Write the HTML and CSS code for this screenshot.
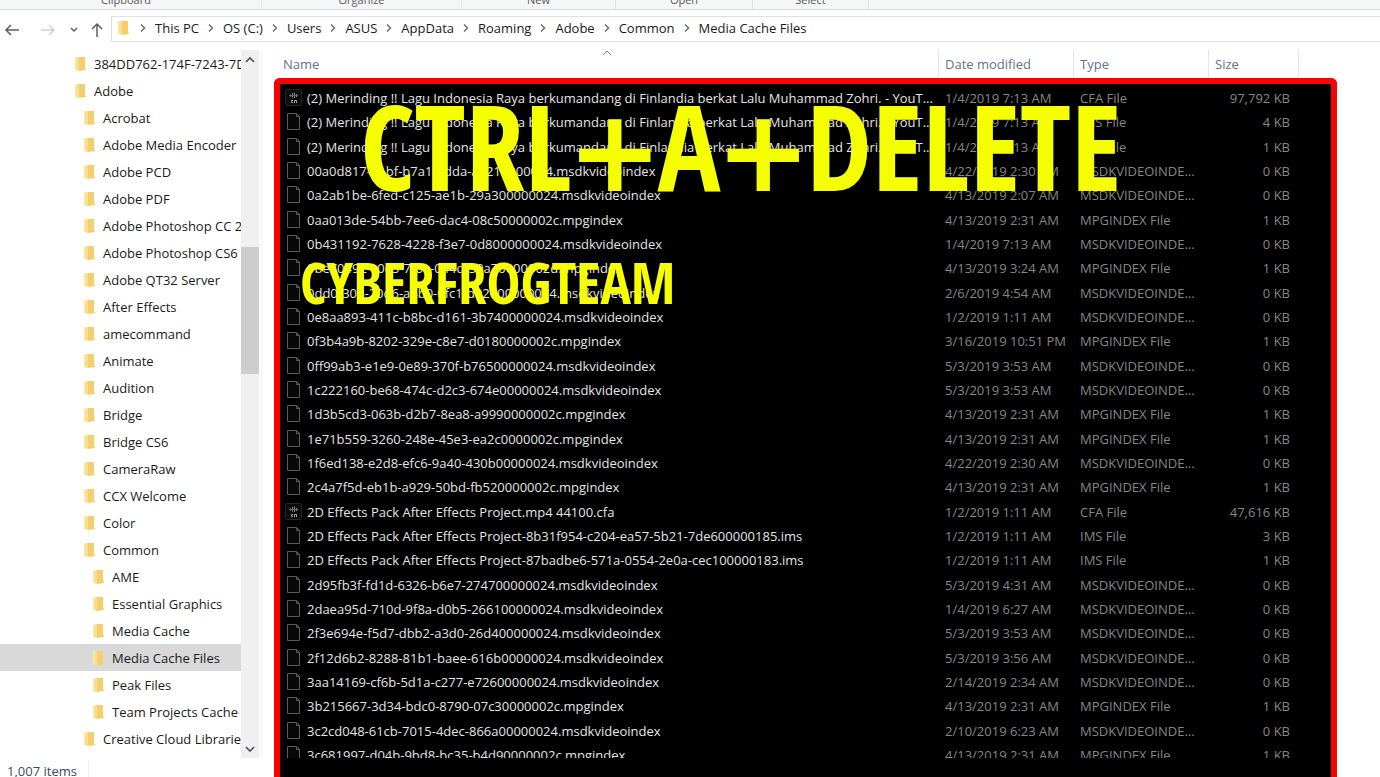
FILE: index.html
```
<!DOCTYPE html>
<html lang="en">
<head>
    <meta charset="UTF-8">
    <meta name="viewport" content="width=device-width, initial-scale=1.0">
    <title>Media Cache Files</title>
    <link rel="stylesheet" href="styles.css">
</head>
<body>
    <svg class="sprite" aria-hidden="true">
        <symbol id="folder" viewBox="0 0 12 16">
            <path fill="#f3cf70" d="M4 1h7v11l1 1v1l-7 1z"/>
            <path fill="#fbdf8e" d="M1 1l4 1v13l-4-1z"/>
            <path fill="#ffe9a9" d="M1 1h1v13H1z"/>
        </symbol>
        <symbol id="sep" viewBox="0 0 24 10">
            <path fill="none" stroke="#666" stroke-width="1.4" d="M10 1.5l3.5 3.5-3.5 3.5"/>
        </symbol>
        <symbol id="file" viewBox="0 0 18 18">
            <path fill="#080808" stroke="#5c5c5c" d="M2.500.5h9l3 3v13h-12z"/>
            <path fill="none" stroke="#5c5c5c" d="M11.500.5v3h3"/>
        </symbol>
        <symbol id="audio" viewBox="0 0 18 18">
            <rect x=".5" y=".5" width="16" height="16" rx="1" fill="#0c0c0c" stroke="#262626"/>
            <path stroke="#8d8d8d" d="M5.500 5.500v2M7.500 4v4.500M9.500 3.500v5.500M11.500 5v3"/>
            <path stroke="#666" d="M4 6.500h9"/>
            <path fill="none" stroke="#a5a5a5" d="M8 11.500H6.500v2H8M9.500 14v-2.500h2V14"/>
        </symbol>
    </svg>

    <div class="ribbon">
        <div class="group clipboard">Clipboard</div>
        <div class="group organize">Organize</div>
        <div class="group new">New</div>
        <div class="group open">Open</div>
        <div class="group select">Select</div>
    </div>

    <div class="address">
        <div class="nav">
            <button aria-label="Back"><svg width="16" height="14"><path d="M15 7H2M7 2L2 7l5 5"/></svg></button>
            <button aria-label="Forward" class="off"><svg width="16" height="14"><path d="M1 7h13M9 2l5 5-5 5"/></svg></button>
            <button aria-label="Recent locations" class="recent"><svg width="10" height="8"><path d="M2 2l3 3 3-3"/></svg></button>
            <button aria-label="Up"><svg width="12" height="16"><path d="M6 15V2M1 7l5-5 5 5"/></svg></button>
        </div>
        <nav class="path" id="path">
            <svg class="folder"><use href="#folder"/></svg>
        </nav>
    </div>

    <div class="main">
        <aside class="sidebar">
            <div class="panes">
                <ul class="tree" id="tree"></ul>
                <div class="scroll">
                    <button aria-label="Scroll up"><svg width="12" height="8"><path d="M2 6l4-4 4 4"/></svg></button>
                    <div class="track"><div class="thumb"></div></div>
                    <button aria-label="Scroll down"><svg width="12" height="8"><path d="M2 2l4 4 4-4"/></svg></button>
                </div>
            </div>
            <div class="status"><span>1,007 items</span></div>
        </aside>

        <section class="content">
            <div class="heads">
                <button class="head name">Name
                    <svg class="sort" width="10" height="6"><path d="M1 5l4-4 4 4"/></svg>
                </button>
                <button class="head date">Date modified</button>
                <button class="head type">Type</button>
                <button class="head size">Size</button>
            </div>
            <div class="frame">
                <div class="list">
                    <table class="files">
                        <tbody id="files"></tbody>
                    </table>
                </div>
                <div class="caption big">CTRL<span class="plus">+</span>A<span class="plus">+</span>DELETE</div>
                <div class="caption small">CYBERFROGTEAM</div>
            </div>
        </section>
    </div>

    <script src="script.js"></script>
</body>
</html>
```
FILE: styles.css
```
* {
    box-sizing: border-box;
}
body {
    margin: 0;
    height: 100vh;
    overflow: hidden;
    display: flex;
    flex-direction: column;
    background: #fff;
    color: #1a1a1a;
    font-family: "Open Sans", "Noto Sans", sans-serif;
    font-size: 13px;
    line-height: 20px;
}
button {
    padding: 0;
    border: none;
    background: none;
    font: inherit;
    color: inherit;
}
.sprite {
    display: none;
}
.folder {
    width: 12px;
    height: 16px;
    flex: none;
}

/* ribbon */
.ribbon {
    height: 10px;
    flex: none;
    display: flex;
    align-items: flex-end;
    overflow: hidden;
    background: #f5f6f7;
    border-bottom: 1px solid #dadbdc;
    color: #5a5a5a;
    font-size: 11px;
    line-height: 18px;
    text-align: center;
}
.group {
    border-right: 1px solid #e2e3e4;
}
.clipboard {
    width: 262px;
    padding-right: 9px;
}
.organize {
    width: 200px;
}
.new {
    width: 154px;
}
.open {
    width: 137px;
}
.select {
    width: 116px;
}

/* address bar */
.address {
    display: flex;
    flex: none;
    margin-top: 6px;
    height: 26px;
}
.nav {
    width: 111px;
    display: flex;
    align-items: center;
    justify-content: space-between;
    padding: 2px 8px 0 4px;
}
.nav button {
    display: flex;
}
.nav path {
    fill: none;
    stroke: #5f5f5f;
    stroke-width: 1.5;
}
.nav .off {
    margin-left: 8px;
}
.nav .off path {
    stroke: #d0d0d0;
}
.path {
    flex: 1;
    display: flex;
    align-items: center;
    padding: 0 0 2px 5px;
    border: 1px solid #e0e0e0;
    border-right: none;
}
.path a {
    color: #1a1a1a;
    text-decoration: none;
}
.path .folder {
    margin-right: 2px;
}
.path .sep {
    width: 24px;
    height: 10px;
}

/* folder tree */
.main {
    flex: 1;
    min-height: 0;
    display: flex;
    padding-top: 8px;
}
.sidebar {
    width: 262px;
    flex: none;
    display: flex;
    flex-direction: column;
}
.panes {
    flex: 1;
    min-height: 0;
    display: flex;
    border-right: 1px solid #f2f2f2;
}
.tree {
    width: 241px;
    margin: 0;
    padding: 0;
    list-style: none;
    overflow: hidden;
}
.tree li {
    display: flex;
    align-items: center;
    gap: 8px;
    height: 27px;
    padding-left: 74px;
    white-space: nowrap;
}
.tree .level-1 {
    padding-left: 83px;
}
.tree .level-2 {
    padding-left: 92px;
}
.tree .current {
    background: #d9d9d9;
}
.scroll {
    width: 18px;
    display: flex;
    flex-direction: column;
    background: #f0f0f0;
}
.scroll button {
    height: 19px;
    display: flex;
    align-items: center;
    justify-content: center;
}
.scroll path {
    fill: none;
    stroke: #505050;
    stroke-width: 1.6;
}
.track {
    flex: 1;
    padding-top: 178px;
}
.thumb {
    height: 127px;
    background: #cdcdcd;
}
.status {
    height: 19px;
    padding: 3px 0 0 7px;
    color: #3b4a66;
}
.status span {
    display: inline-block;
    padding-right: 11px;
    border-right: 1px solid #f0f0f0;
}

/* file list */
.content {
    flex: 1;
    min-width: 0;
    display: flex;
    flex-direction: column;
    padding: 0 43px 0 12px;
}
.heads {
    display: flex;
    height: 28px;
    flex: none;
    padding-right: 38px;
    color: #62738a;
}
.head {
    position: relative;
    padding-left: 6px;
    border-right: 1px solid #e5e5e5;
    text-align: left;
}
.head.name {
    flex: 1;
    padding-left: 9px;
}
.date {
    width: 135px;
}
.type {
    width: 135px;
}
.size {
    width: 90px;
}
.sort {
    position: absolute;
    top: 0;
    left: 50%;
    margin-left: -4px;
}
.sort path {
    fill: none;
    stroke: #888;
}
.frame {
    position: relative;
    flex: 1;
    min-height: 0;
    border: 6px solid #f00;
    border-bottom: none;
    border-radius: 6px 6px 0 0;
    background: #000;
    padding: 2px 33px 19px 5px;
}
.list {
    height: 100%;
    overflow: hidden;
}
.files {
    width: 100%;
    table-layout: fixed;
    border-collapse: collapse;
    color: #868686;
}
.files tr {
    height: 24px;
}
.files tr:nth-child(3n) {
    height: 25px;
}
.files td {
    padding: 0 0 0 7px;
    white-space: nowrap;
}
.files td.name {
    padding: 0;
    color: #e4e4e4;
}
.files td.size {
    padding-right: 8px;
    text-align: right;
}
.file {
    display: flex;
    align-items: center;
    gap: 4px;
}
.file svg {
    width: 18px;
    height: 18px;
    flex: none;
}

/* captions over the list */
.caption {
    position: absolute;
    color: #f6ff00;
    font-family: "Open Sans Condensed", "Noto Sans Condensed", "Liberation Sans Narrow", sans-serif;
    font-weight: bold;
    line-height: 1;
    white-space: nowrap;
}
.big {
    top: 3px;
    left: 80px;
    font-size: 118px;
}
.plus {
    margin: 0 -5px;
    font-family: "DejaVu Sans", sans-serif;
    font-size: 114px;
}
.small {
    top: 170px;
    left: 20px;
    font-size: 57px;
}
```
FILE: script.js
```
const crumbs = ['This PC', 'OS (C:)', 'Users', 'ASUS', 'AppData', 'Roaming', 'Adobe', 'Common', 'Media Cache Files'];

// [level, name]
const folders = [
    [0, '384DD762-174F-7243-7D1A'],
    [0, 'Adobe'],
    [1, 'Acrobat'],
    [1, 'Adobe Media Encoder'],
    [1, 'Adobe PCD'],
    [1, 'Adobe PDF'],
    [1, 'Adobe Photoshop CC 2019'],
    [1, 'Adobe Photoshop CS6'],
    [1, 'Adobe QT32 Server'],
    [1, 'After Effects'],
    [1, 'amecommand'],
    [1, 'Animate'],
    [1, 'Audition'],
    [1, 'Bridge'],
    [1, 'Bridge CS6'],
    [1, 'CameraRaw'],
    [1, 'CCX Welcome'],
    [1, 'Color'],
    [1, 'Common'],
    [2, 'AME'],
    [2, 'Essential Graphics'],
    [2, 'Media Cache'],
    [2, 'Media Cache Files'],
    [2, 'Peak Files'],
    [2, 'Team Projects Cache'],
    [1, 'Creative Cloud Libraries']
];

const song = '(2) Merinding !! Lagu Indonesia Raya berkumandang di Finlandia berkat Lalu Muhammad Zohri. - YouT...';
const MSDK = 'MSDKVIDEOINDE...';
const MPG = 'MPGINDEX File';

// [name, date modified, type, size in KB]
const files = [
    [song, '1/4/2019 7:13 AM', 'CFA File', '97,792'],
    [song, '1/4/2019 7:13 AM', 'IMS File', '4'],
    [song, '1/4/2019 7:13 AM', 'IMS File', '1'],
    ['00a0d817-11bf-b7a1-8dda-a4210000024.msdkvideoindex', '4/22/2019 2:30 AM', MSDK, '0'],
    ['0a2ab1be-6fed-c125-ae1b-29a300000024.msdkvideoindex', '4/13/2019 2:07 AM', MSDK, '0'],
    ['0aa013de-54bb-7ee6-dac4-08c50000002c.mpgindex', '4/13/2019 2:31 AM', MPG, '1'],
    ['0b431192-7628-4228-f3e7-0d8000000024.msdkvideoindex', '1/4/2019 7:13 AM', MSDK, '0'],
    ['0be70492-c0e5-7f0a-044d-50a70000002d.mpgindex', '4/13/2019 3:24 AM', MPG, '1'],
    ['0dd0f304-20d6-a4b0-0fc1-d02000000024.msdkvideoindex', '2/6/2019 4:54 AM', MSDK, '0'],
    ['0e8aa893-411c-b8bc-d161-3b7400000024.msdkvideoindex', '1/2/2019 1:11 AM', MSDK, '0'],
    ['0f3b4a9b-8202-329e-c8e7-d0180000002c.mpgindex', '3/16/2019 10:51 PM', MPG, '1'],
    ['0ff99ab3-e1e9-0e89-370f-b76500000024.msdkvideoindex', '5/3/2019 3:53 AM', MSDK, '0'],
    ['1c222160-be68-474c-d2c3-674e00000024.msdkvideoindex', '5/3/2019 3:53 AM', MSDK, '0'],
    ['1d3b5cd3-063b-d2b7-8ea8-a9990000002c.mpgindex', '4/13/2019 2:31 AM', MPG, '1'],
    ['1e71b559-3260-248e-45e3-ea2c0000002c.mpgindex', '4/13/2019 2:31 AM', MPG, '1'],
    ['1f6ed138-e2d8-efc6-9a40-430b00000024.msdkvideoindex', '4/22/2019 2:30 AM', MSDK, '0'],
    ['2c4a7f5d-eb1b-a929-50bd-fb520000002c.mpgindex', '4/13/2019 2:31 AM', MPG, '1'],
    ['2D Effects Pack After Effects Project.mp4 44100.cfa', '1/2/2019 1:11 AM', 'CFA File', '47,616'],
    ['2D Effects Pack After Effects Project-8b31f954-c204-ea57-5b21-7de600000185.ims', '1/2/2019 1:11 AM', 'IMS File', '3'],
    ['2D Effects Pack After Effects Project-87badbe6-571a-0554-2e0a-cec100000183.ims', '1/2/2019 1:11 AM', 'IMS File', '1'],
    ['2d95fb3f-fd1d-6326-b6e7-274700000024.msdkvideoindex', '5/3/2019 4:31 AM', MSDK, '0'],
    ['2daea95d-710d-9f8a-d0b5-266100000024.msdkvideoindex', '1/4/2019 6:27 AM', MSDK, '0'],
    ['2f3e694e-f5d7-dbb2-a3d0-26d400000024.msdkvideoindex', '5/3/2019 3:53 AM', MSDK, '0'],
    ['2f12d6b2-8288-81b1-baee-616b00000024.msdkvideoindex', '5/3/2019 3:56 AM', MSDK, '0'],
    ['3aa14169-cf6b-5d1a-c277-e72600000024.msdkvideoindex', '2/14/2019 2:34 AM', MSDK, '0'],
    ['3b215667-3d34-bdc0-8790-07c30000002c.mpgindex', '4/13/2019 2:31 AM', MPG, '1'],
    ['3c2cd048-61cb-7015-4dec-866a00000024.msdkvideoindex', '2/10/2019 6:23 AM', MSDK, '0'],
    ['3c681997-d04b-9bd8-bc35-b4d90000002c.mpgindex', '4/13/2019 2:31 AM', MPG, '1']
];

document.getElementById('path').innerHTML += crumbs.map(name =>
    `<svg class="sep"><use href="#sep"/></svg><a href="#">${name}</a>`
).join('');

document.getElementById('tree').innerHTML = folders.map(([level, name]) =>
    `<li class="level-${level}${name === 'Media Cache Files' ? ' current' : ''}">
        <svg class="folder"><use href="#folder"/></svg><span>${name}</span>
    </li>`
).join('');

document.getElementById('files').innerHTML = files.map(([name, date, type, size]) =>
    `<tr>
        <td class="name"><div class="file"><svg><use href="#${type === 'CFA File' ? 'audio' : 'file'}"/></svg><span>${name}</span></div></td>
        <td class="date">${date}</td>
        <td class="type">${type}</td>
        <td class="size">${size} KB</td>
    </tr>`
).join('');
```
